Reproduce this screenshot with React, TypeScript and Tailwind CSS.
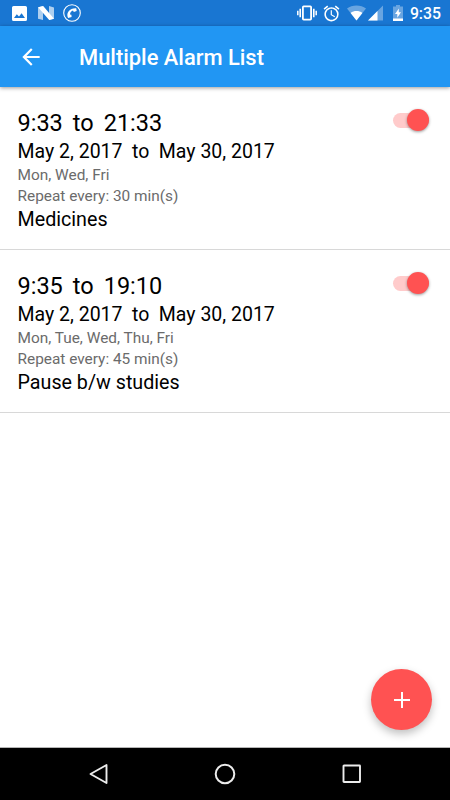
import { useState } from 'react';
import { MdAlarm, MdArrowBack } from 'react-icons/md';

type Alarm = {
  id: number;
  startTime: string;
  endTime: string;
  startDate: string;
  endDate: string;
  days: string;
  interval: number;
  label: string;
};

const ALARMS: Alarm[] = [
  {
    id: 1,
    startTime: '9:33',
    endTime: '21:33',
    startDate: 'May 2, 2017',
    endDate: 'May 30, 2017',
    days: 'Mon, Wed, Fri',
    interval: 30,
    label: 'Medicines',
  },
  {
    id: 2,
    startTime: '9:35',
    endTime: '19:10',
    startDate: 'May 2, 2017',
    endDate: 'May 30, 2017',
    days: 'Mon, Tue, Wed, Thu, Fri',
    interval: 45,
    label: 'Pause b/w studies',
  },
];

function StatusBar() {
  return (
    <div className="h-[26px] bg-[#1976d2] flex items-center justify-between pl-3 pr-[9px] text-white">
      <div className="flex items-center">
        <svg className="w-[15px] h-[15px]" viewBox="0 0 15 15">
          <path
            fill="currentColor"
            fillRule="evenodd"
            d="M1.6 0h11.8A1.6 1.6 0 0 1 15 1.6v11.8a1.6 1.6 0 0 1-1.6 1.6H1.6A1.6 1.6 0 0 1 0 13.4V1.6A1.6 1.6 0 0 1 1.6 0zM2 12h11L9.6 7.2 7 10.6 4.8 8.3z"
          />
        </svg>
        <svg className="w-4 h-[14px] ml-[11px]" viewBox="0 0 16 14">
          <path fill="currentColor" fillOpacity=".65" d="M0 1.4 5 0v14l-5-1.2zM11 0l5 1.4v11.4L11 14z" />
          <path fill="currentColor" d="M0 1.2 5.2 0 16 12.8 11.2 14z" />
        </svg>
        <svg className="w-[18px] h-[18px] ml-[9px]" viewBox="0 0 18 18">
          <circle cx="9" cy="9" r="8.3" fill="none" stroke="currentColor" strokeWidth="1.1" />
          <path
            fill="currentColor"
            d="M5.1 14C2.5 8.5 7 3.800 13.200 4.200l.5 2.900-2.900.9-.8-1.400C8.300 7.100 7 8.700 7 10.500l1.400.2.200 2.400z"
          />
        </svg>
      </div>

      <div className="flex items-center">
        <svg className="w-5 h-5" viewBox="0 0 20 20" fill="none" stroke="currentColor">
          <rect x="5.9" y="3.4" width="8.2" height="13.2" rx=".8" strokeWidth="1.8" />
          <path d="M3.2 5.8v8.4M16.8 5.8v8.4" strokeWidth="1.6" />
          <path d="M.8 7.8v4.4M19.2 7.8v4.4" strokeWidth="1.5" />
        </svg>
        <MdAlarm className="w-[19px] h-[19px] ml-[5px]" />
        <svg className="w-[19px] h-4 ml-[6px]" viewBox="0 0 19 16">
          <path fill="currentColor" fillOpacity=".35" d="M0 3.500C5-.6 14-.6 19 3.500L9.500 15.500z" />
          <path fill="currentColor" d="M3.600 8c3.400-2.600 8.400-2.600 11.800 0L9.500 15.500z" />
        </svg>
        <svg className="w-[15px] h-4 ml-[2px]" viewBox="0 0 15 16">
          <path fill="currentColor" fillOpacity=".35" d="M0 15.500 15 .5v15z" />
          <path fill="currentColor" d="M0 15.500 9.500 6v9.500z" />
        </svg>
        <svg className="w-[10px] h-4 ml-[10px]" viewBox="0 0 10 16">
          <path fill="currentColor" fillOpacity=".35" d="M3 0h4v1.500h3V14H0V1.500h3z" />
          <path fill="currentColor" d="M0 13.500h10V16H0zM5.800 3.500 2 9h2.300v3.700L8 7.200H5.800z" />
        </svg>
        <span className="ml-[7px] mt-[2px] text-[15.800px] leading-none font-medium">9:35</span>
      </div>
    </div>
  );
}

function Toggle({ checked, onChange }: { checked: boolean; onChange: () => void }) {
  return (
    <button
      role="switch"
      aria-checked={checked}
      onClick={onChange}
      className="mt-px w-[37px] h-[22px] flex items-center justify-end"
    >
      <span
        className={`w-[36px] h-[15px] rounded-full flex items-center ${
          checked ? 'bg-[#ffcbcb] justify-end' : 'bg-gray-300 justify-start'
        }`}
      >
        <span
          className={`w-[22px] h-[22px] shrink-0 rounded-full shadow-[0_1px_3px_rgba(0,0,0,0.4)] ${
            checked ? 'bg-[#ff5252]' : 'bg-gray-50'
          }`}
        />
      </span>
    </button>
  );
}

function AlarmItem({ alarm }: { alarm: Alarm }) {
  const [enabled, setEnabled] = useState(true);

  return (
    <li className="h-[163px] flex justify-between items-start pl-[17.500px] pr-[21.500px] pt-[21px] border-b border-[#d8d8d8]">
      <div className="text-black">
        <div className="flex gap-[10px] pt-px text-[23.500px] leading-[28px]">
          <span>{alarm.startTime}</span>
          <span>to</span>
          <span>{alarm.endTime}</span>
        </div>
        <div className="flex gap-[9.500px] text-[19.500px] leading-[29px]">
          <span>{alarm.startDate}</span>
          <span>to</span>
          <span>{alarm.endDate}</span>
        </div>
        <p className="text-[15.400px] leading-[19px] text-[#6b6b6b]">{alarm.days}</p>
        <p className="text-[15.400px] leading-[22px] text-[#6b6b6b]">
          Repeat every: {alarm.interval} min(s)
        </p>
        <p className="text-[19.700px] leading-[26px]">{alarm.label}</p>
      </div>
      <Toggle checked={enabled} onChange={() => setEnabled(!enabled)} />
    </li>
  );
}

function NavBar() {
  return (
    <div className="h-[53px] bg-black border-t border-[#b5b5b5] flex items-center justify-between pl-[88px] pr-[88px] text-[#ececec]">
      <svg className="w-5 h-[22px]" viewBox="0 0 20 22" fill="none" stroke="currentColor">
        <path d="M18.500 2v18L2.500 11z" strokeWidth="1.900" strokeLinejoin="round" />
      </svg>
      <svg className="w-[22px] h-[22px]" viewBox="0 0 22 22" fill="none" stroke="currentColor">
        <circle cx="11" cy="11" r="9.300" strokeWidth="2" />
      </svg>
      <svg className="w-5 h-5" viewBox="0 0 20 20" fill="none" stroke="currentColor">
        <rect x="1.500" y="1.500" width="16.500" height="16.500" rx=".5" strokeWidth="1.900" />
      </svg>
    </div>
  );
}

export default function App() {
  return (
    <div className="relative w-full h-screen bg-white flex flex-col overflow-hidden font-['Roboto',sans-serif]">
      <StatusBar />
      <header className="relative h-[61px] bg-[#2196f3] text-white flex items-center pl-[18px] shadow-[0_1px_4px_rgba(0,0,0,0.4)]">
        <button aria-label="Back">
          <MdArrowBack className="w-[26px] h-[26px]" />
        </button>
        <h1 className="ml-[35px] mt-[3px] text-[21.900px] leading-none font-medium">Multiple Alarm List</h1>
      </header>

      <ul className="flex-1">
        {ALARMS.map((alarm) => (
          <AlarmItem key={alarm.id} alarm={alarm} />
        ))}
      </ul>

      <button
        aria-label="Add alarm"
        className="absolute right-[18px] bottom-[70px] w-[61px] h-[61px] rounded-full bg-[#ff5252] text-white flex items-center justify-center shadow-[0_4px_9px_rgba(0,0,0,0.25)]"
      >
        <svg className="w-4 h-4" viewBox="0 0 16 16" stroke="currentColor" strokeWidth="2">
          <path d="M8 0v16M0 8h16" />
        </svg>
      </button>

      <NavBar />
    </div>
  );
}
